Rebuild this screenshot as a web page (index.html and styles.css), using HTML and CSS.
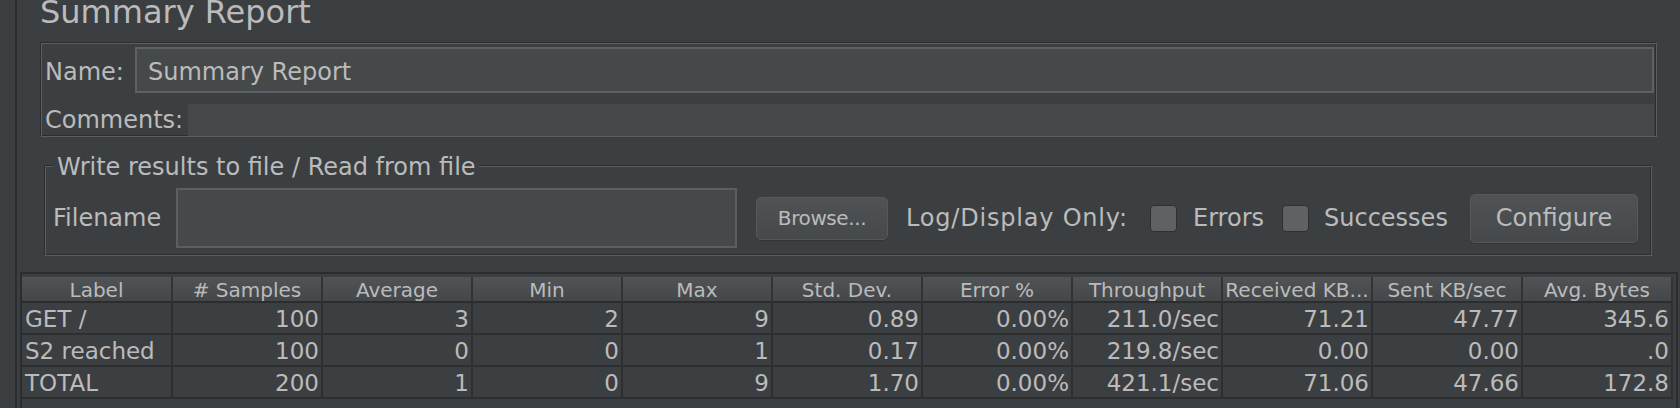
FILE: index.html
```html
<!DOCTYPE html>
<html>
<head>
<meta charset="utf-8">
<title>Summary Report</title>
<link rel="stylesheet" href="styles.css">
</head>
<body>
<div class="window">
  <div class="gutter"></div>
  <div class="main">
    <h1 class="title">Summary Report</h1>

    <div class="name-panel">
      <div class="name-row">
        <span class="lbl name-lbl">Name:</span>
        <div class="field name-field">Summary Report</div>
      </div>
      <div class="comments-row">
        <span class="lbl comments-lbl">Comments:</span>
        <div class="field comments-field"></div>
      </div>
    </div>

    <div class="file-box">
      <div class="legend">Write results to file / Read from file</div>
      <div class="file-row">
        <span class="lbl filename-lbl">Filename</span>
        <div class="field filename-field"></div>
        <div class="btn browse">Browse...</div>
        <span class="lbl log-lbl">Log/Display Only:</span>
        <span class="check"></span>
        <span class="lbl check-lbl errors-lbl">Errors</span>
        <span class="check"></span>
        <span class="lbl check-lbl successes-lbl">Successes</span>
        <div class="btn configure">Configure</div>
      </div>
    </div>

    <div class="table-wrap">
      <div class="grid">
        <div class="th">Label</div>
        <div class="th"># Samples</div>
        <div class="th">Average</div>
        <div class="th">Min</div>
        <div class="th">Max</div>
        <div class="th">Std. Dev.</div>
        <div class="th">Error %</div>
        <div class="th">Throughput</div>
        <div class="th">Received KB...</div>
        <div class="th">Sent KB/sec</div>
        <div class="th">Avg. Bytes</div>

        <div class="td txt">GET /</div>
        <div class="td">100</div>
        <div class="td">3</div>
        <div class="td">2</div>
        <div class="td">9</div>
        <div class="td">0.89</div>
        <div class="td">0.00%</div>
        <div class="td">211.0/sec</div>
        <div class="td">71.21</div>
        <div class="td">47.77</div>
        <div class="td">345.6</div>

        <div class="td txt">S2 reached</div>
        <div class="td">100</div>
        <div class="td">0</div>
        <div class="td">0</div>
        <div class="td">1</div>
        <div class="td">0.17</div>
        <div class="td">0.00%</div>
        <div class="td">219.8/sec</div>
        <div class="td">0.00</div>
        <div class="td">0.00</div>
        <div class="td">.0</div>

        <div class="td txt">TOTAL</div>
        <div class="td">200</div>
        <div class="td">1</div>
        <div class="td">0</div>
        <div class="td">9</div>
        <div class="td">1.70</div>
        <div class="td">0.00%</div>
        <div class="td">421.1/sec</div>
        <div class="td">71.06</div>
        <div class="td">47.66</div>
        <div class="td">172.8</div>
      </div>
    </div>
  </div>
</div>
</body>
</html>
```

FILE: styles.css
```css
* { box-sizing: border-box; }

html, body {
  margin: 0;
  padding: 0;
}

body {
  width: 1680px;
  height: 408px;
  overflow: hidden;
  background: #3c3f41;
  color: #bbbbbb;
  font-family: "DejaVu Sans", "Noto Sans", sans-serif;
  font-size: 24px;
}

.window {
  display: flex;
  height: 408px;
}

.gutter {
  flex: none;
  width: 17px;
  border-right: 2px solid #2b2d2f;
}

.main {
  flex: 1;
  min-width: 0;
  display: flex;
  flex-direction: column;
}

.title {
  margin: -6px 0 0 23px;
  font-size: 32px;
  line-height: 37px;
  font-weight: normal;
  white-space: nowrap;
}

.lbl {
  flex: none;
  white-space: nowrap;
}

.field {
  background: #45494a;
}

/* Name / Comments panel */
.name-panel {
  margin: 11px 23px 0 23px;
  padding: 4px 2px 0 4px;
  border: 1px solid;
  border-color: #2b2d2f #5b5e60 #5b5e60 #2b2d2f;
  box-shadow: inset 1px 1px 0 #5b5e60, inset -1px -1px 0 #2b2d2f;
}

.name-row {
  display: flex;
  align-items: flex-start;
}

.name-lbl {
  width: 90px;
  padding-top: 5px;
  line-height: 40px;
}

.name-field {
  flex: 1;
  height: 46px;
  border: 2px solid #5e6163;
  padding: 3px 11px 0;
  line-height: 40px;
  white-space: nowrap;
}

.comments-row {
  display: flex;
  align-items: flex-start;
  margin-top: 11px;
}

.comments-lbl {
  width: 143px;
  line-height: 32px;
}

.comments-field {
  flex: 1;
  height: 32px;
}

/* Write results box */
.file-box {
  display: flex;
  flex-direction: column;
  margin: 28px 28px 0 27px;
  padding: 0 0 7px 8px;
  border: 1px solid;
  border-color: #2b2d2f #5b5e60 #5b5e60 #2b2d2f;
  box-shadow: inset 1px 1px 0 #5b5e60, inset -1px -1px 0 #2b2d2f;
}

.legend {
  align-self: flex-start;
  margin-top: -13px;
  padding: 0 3px 0 4px;
  background: #3c3f41;
  line-height: 28px;
  white-space: nowrap;
}

.file-row {
  display: flex;
  align-items: center;
  margin-top: 7px;
  height: 60px;
}

.filename-lbl {
  width: 123px;
  line-height: 28px;
}

.filename-field {
  flex: none;
  width: 561px;
  height: 60px;
  border: 2px solid #5c5f61;
}

.btn {
  flex: none;
  display: flex;
  align-items: center;
  justify-content: center;
  border: 1px solid #55595b;
  border-radius: 5px;
  background: linear-gradient(#4f5355, #45494b);
  box-shadow: 0 1px 0 #333537;
  white-space: nowrap;
}

.browse {
  margin-left: 19px;
  width: 132px;
  height: 43px;
  font-size: 20px;
  letter-spacing: -0.4px;
}

.log-lbl {
  margin-left: 18px;
  width: 244px;
  letter-spacing: 0.8px;
}

.check {
  flex: none;
  width: 27px;
  height: 27px;
  border: 1px solid #2e3032;
  border-radius: 4px;
  background: #5f6264;
}

.check-lbl {
  margin-left: 16px;
}

.errors-lbl { width: 89px; }
.successes-lbl { width: 146px; margin-left: 15px; }

.configure {
  width: 168px;
  height: 49px;
}

/* Table */
.table-wrap {
  flex: 1;
  margin: 16px 2px 0 3px;
  padding-top: 3px;
  border: 2px solid #2b2d2f;
  border-bottom: none;
}

.grid {
  display: grid;
  grid-template-columns: 151px repeat(10, 150px);
}

.th {
  height: 26px;
  line-height: 26px;
  font-size: 20px;
  text-align: center;
  white-space: nowrap;
  overflow: hidden;
  background: linear-gradient(#505456, #43474a);
  border-right: 2px solid #313335;
  border-bottom: 2px solid #2b2d2f;
}

.td {
  height: 32px;
  line-height: 32px;
  font-size: 23px;
  text-align: right;
  padding: 0 2px 0 3px;
  white-space: nowrap;
  overflow: hidden;
  border-right: 2px solid #2d2f31;
  border-bottom: 2px solid #2d2f31;
}

.td.txt {
  text-align: left;
}
```
